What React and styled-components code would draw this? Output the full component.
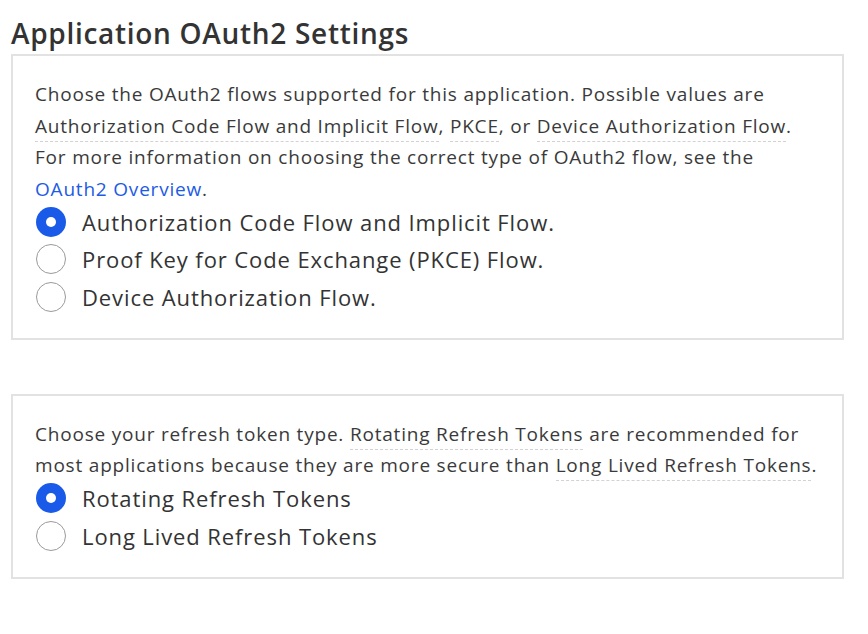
import styled, { createGlobalStyle } from 'styled-components';

const GlobalStyle = createGlobalStyle`
  body {
    margin: 0;
    background: #fff;
    font-family: "Open Sans", Lato, sans-serif;
    color: #3a3a3a;
  }
`;

const Page = styled.div`
  padding: 14px 24px 40px 11px;
  width: 833px;
`;

const Title = styled.h2`
  margin: 0 0 2px 0;
  font-size: 28px;
  font-weight: 600;
  letter-spacing: 0.7px;
  line-height: 38px;
  color: #333;
`;

const Panel = styled.section`
  border: 2px solid #e2e2e2;
  padding: 23px 22px 22px 22px;
  margin-bottom: ${(props) => props.gap || 0}px;
`;

const Description = styled.p`
  margin: 0 0 -2px 0;
  font-size: 19px;
  letter-spacing: 0.8px;
  line-height: 31.5px;
  white-space: nowrap;
`;

const Term = styled.span`
  border-bottom: 1px dashed #d2d2d2;
  padding-bottom: 2px;
`;

const Link = styled.a`
  color: #1d5be6;
  text-decoration: none;
`;

const Options = styled.div`
  display: flex;
  flex-direction: column;
`;

const Option = styled.label`
  display: flex;
  align-items: center;
  gap: 16px;
  height: 37.5px;
  font-size: 22px;
  letter-spacing: 0.9px;
  color: #333;
  cursor: pointer;
`;

const RadioMark = styled.span`
  box-sizing: border-box;
  width: 30px;
  height: 30px;
  margin-left: 1px;
  border-radius: 50%;
  flex-shrink: 0;
  background: ${(props) => (props.checked ? '#1a5ae8' : '#fff')};
  border: ${(props) => (props.checked ? 'none' : '1px solid #9a9a9a')};
  display: flex;
  align-items: center;
  justify-content: center;

  &::after {
    content: '';
    display: ${(props) => (props.checked ? 'block' : 'none')};
    width: 10px;
    height: 10px;
    border-radius: 50%;
    background: #fff;
  }
`;

const Radio = ({ checked, children }) => (
  <Option>
    <RadioMark checked={checked} />
    <span>{children}</span>
  </Option>
);

export default function App() {
  return (
    <>
      <GlobalStyle />
      <Page>
        <Title>Application OAuth2 Settings</Title>
        <Panel gap={54}>
          <Description>
            Choose the OAuth2 flows supported for this application. Possible values are
            <br />
            <Term>Authorization Code Flow and Implicit Flow</Term>, <Term>PKCE</Term>, or{' '}
            <Term>Device Authorization Flow</Term>.
            <br />
            For more information on choosing the correct type of OAuth2 flow, see the
            <br />
            <Link href="#">OAuth2 Overview</Link>.
          </Description>
          <Options>
            <Radio checked>Authorization Code Flow and Implicit Flow.</Radio>
            <Radio>Proof Key for Code Exchange (PKCE) Flow.</Radio>
            <Radio>Device Authorization Flow.</Radio>
          </Options>
        </Panel>
        <Panel>
          <Description>
            Choose your refresh token type. <Term>Rotating Refresh Tokens</Term> are
            recommended for
            <br />
            most applications because they are more secure than{' '}
            <Term>Long Lived Refresh Tokens</Term>.
          </Description>
          <Options>
            <Radio checked>Rotating Refresh Tokens</Radio>
            <Radio>Long Lived Refresh Tokens</Radio>
          </Options>
        </Panel>
      </Page>
    </>
  );
}
